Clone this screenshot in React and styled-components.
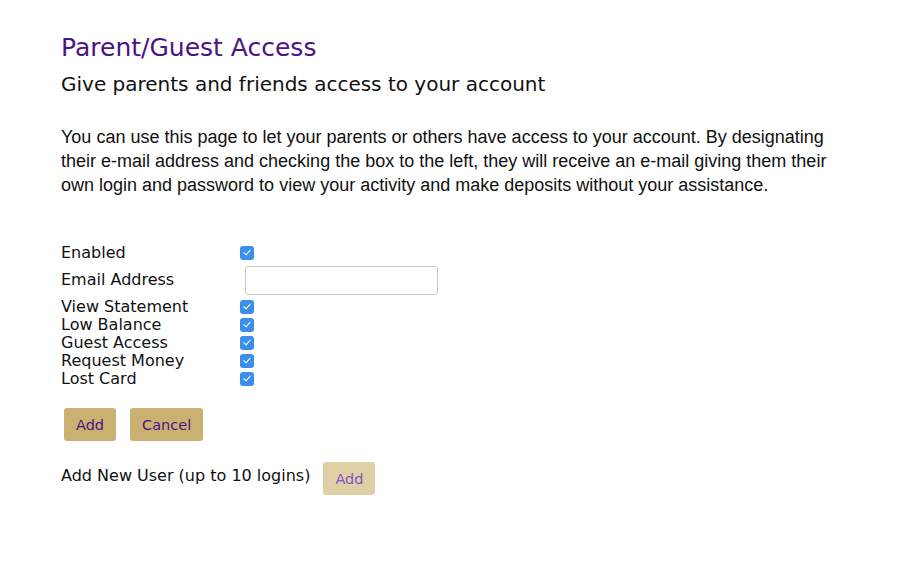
import React from 'react'
import styled, { createGlobalStyle } from 'styled-components'

const GlobalStyle = createGlobalStyle`
  body {
    margin: 0;
    background: #fff;
    font-family: Verdana, "DejaVu Sans", sans-serif;
    color: #111;
  }
`

const Page = styled.div`
  padding: 33px 40px 40px 61px;
`

const Title = styled.h1`
  margin: 0;
  font-size: 25px;
  font-weight: normal;
  color: #4a1484;
  line-height: 30px;
`

const Subtitle = styled.h2`
  margin: 9px 0 0;
  font-size: 20px;
  font-weight: normal;
  line-height: 24px;
`

const Intro = styled.p`
  margin: 29px 0 0;
  font-family: "Liberation Sans", Arial, sans-serif;
  font-size: 18px;
  line-height: 24px;
  max-width: 798px;
`

const Form = styled.div`
  margin-top: 47px;
  display: grid;
  grid-template-columns: 180px auto;
  justify-content: start;
  align-items: center;
  font-size: 16px;
`

const Label = styled.label`
  line-height: ${p => p.$h || 18}px;
`

const Cell = styled.div`
  display: flex;
  align-items: center;
  height: ${p => p.$h || 18}px;
`

const Check = styled.input.attrs({ type: 'checkbox' })`
  appearance: none;
  margin: 0 0 0 -1px;
  width: 14px;
  height: 14px;
  border-radius: 3px;
  background: #3b8eea;
  position: relative;
  cursor: pointer;
  &:checked::after {
    content: '';
    position: absolute;
    left: 4.5px;
    top: 2px;
    width: 3px;
    height: 6px;
    border: solid #fff;
    border-width: 0 1.6px 1.6px 0;
    transform: rotate(42deg);
  }
`

const TextInput = styled.input`
  box-sizing: border-box;
  margin-left: 4px;
  width: 193px;
  height: 29px;
  border: 1px solid #c8c8c8;
  border-radius: 3px;
  padding: 0 6px;
  font-size: 15px;
  outline: none;
`

const Buttons = styled.div`
  display: flex;
  gap: 14px;
  margin: 20px 0 0 3px;
`

const Button = styled.button`
  font-family: Verdana, "DejaVu Sans", sans-serif;
  font-size: 14.5px;
  height: 33px;
  padding: 0 12px;
  border: none;
  border-radius: 3px;
  background: ${p => (p.$muted ? '#dfd0a6' : '#c9b172')};
  color: ${p => (p.$muted ? '#8752c2' : '#4a1484')};
  cursor: pointer;
`

const NewUser = styled.div`
  display: flex;
  align-items: center;
  gap: 13px;
  margin-top: 21px;
  font-size: 16px;
`

const NewUserText = styled.span`
  margin-top: -6px;
`

const prefs = ['View Statement', 'Low Balance', 'Guest Access', 'Request Money', 'Lost Card']

export default function App() {
  return (
    <>
      <GlobalStyle />
      <Page>
        <Title>Parent/Guest Access</Title>
        <Subtitle>Give parents and friends access to your account</Subtitle>
        <Intro>
          You can use this page to let your parents or others have access to your account. By
          designating their e-mail address and checking the box to the left, they will receive an
          e-mail giving them their own login and password to view your activity and make deposits
          without your assistance.
        </Intro>
        <Form>
          <Label $h={18}>Enabled</Label>
          <Cell $h={18}>
            <Check defaultChecked />
          </Cell>
          <Label $h={36}>Email Address</Label>
          <Cell $h={36}>
            <TextInput type="email" />
          </Cell>
          {prefs.map(name => (
            <React.Fragment key={name}>
              <Label>{name}</Label>
              <Cell>
                <Check defaultChecked />
              </Cell>
            </React.Fragment>
          ))}
        </Form>
        <Buttons>
          <Button>Add</Button>
          <Button>Cancel</Button>
        </Buttons>
        <NewUser>
          <NewUserText>Add New User (up to 10 logins)</NewUserText>
          <Button $muted>Add</Button>
        </NewUser>
      </Page>
    </>
  )
}
